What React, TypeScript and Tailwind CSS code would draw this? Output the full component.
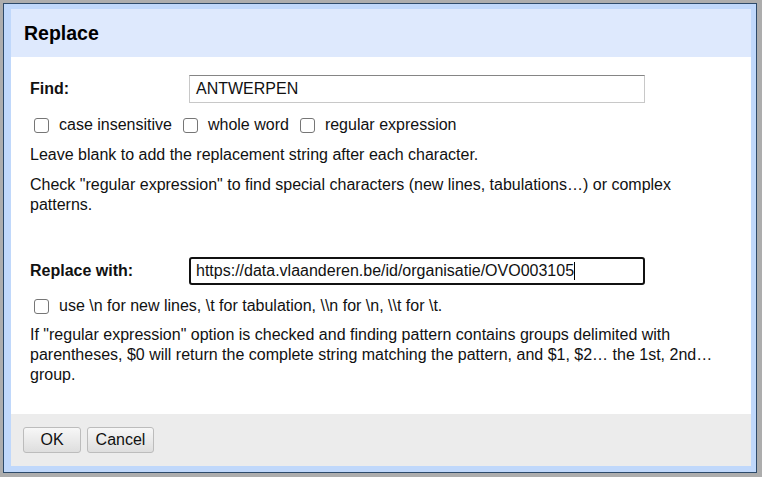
const FONT = { fontFamily: '"Liberation Sans", Arial, sans-serif' }

function Checkbox() {
  return (
    <span className="inline-block w-[15px] h-[15px] shrink-0 rounded-[3px] border border-[#767676] bg-white" />
  )
}

function Option({ label }: { label: string }) {
  return (
    <span className="flex items-center">
      <span className="ml-[4px] mr-[10px] flex items-center">
        <Checkbox />
      </span>
      <span>{label}</span>
    </span>
  )
}

export default function App() {
  return (
    <div
      className="w-[762px] h-[477px] bg-[#adadad] pt-[3px] pl-[3px] text-[16px] leading-[20px] text-[#111]"
      style={FONT}
    >
      <div className="w-[754px] h-[470px] border border-[#2d4a6a] bg-[#c0d8fb] pl-[7px] pr-[5px] pt-[5px] pb-[6px] flex flex-col">
        {/* header */}
        <div className="h-[48px] bg-[#dee9fd] pl-[13px] flex items-center">
          <h1 className="text-[19.5px] font-bold text-black">Replace</h1>
        </div>

        {/* body */}
        <div className="flex-1 bg-white pl-[19px] pr-[19px]">
          <div className="flex items-center mt-[18px]">
            <label className="w-[159px] font-bold">Find:</label>
            <div className="w-[456px] h-[28px] border border-[#c8c8c8] border-t-[#858585] pl-[6px] flex items-center">
              ANTWERPEN
            </div>
          </div>

          <div className="flex items-center gap-[7px] mt-[12px] h-[20px]">
            <Option label="case insensitive" />
            <Option label="whole word" />
            <Option label="regular expression" />
          </div>

          <p className="mt-[10px]">Leave blank to add the replacement string after each character.</p>
          <p className="mt-[10px]">
            Check "regular expression" to find special characters (new lines, tabulations…) or complex patterns.
          </p>

          <div className="flex items-center mt-[42px]">
            <label className="w-[159px] font-bold">Replace with:</label>
            <div className="w-[456px] h-[28px] border-2 border-[#111] rounded-[3px] pl-[5px] flex items-center">
              <span>https://data.vlaanderen.be/id/organisatie/OVO003105</span>
              <span className="w-px h-[18px] bg-black" />
            </div>
          </div>

          <div className="flex items-center mt-[11px] h-[20px]">
            <Option label="use \n for new lines, \t for tabulation, \\n for \n, \\t for \t." />
          </div>

          <p className="mt-[9px]">
            If "regular expression" option is checked and finding pattern contains groups delimited with parentheses,
            $0 will return the complete string matching the pattern, and $1, $2… the 1st, 2nd… group.
          </p>
        </div>

        {/* footer */}
        <div className="h-[52px] bg-[#ececec] pl-[12px] flex items-center gap-[6px]">
          <button className="w-[58px] h-[26px] rounded-[3px] border border-[#bcbcbc] bg-gradient-to-b from-[#f7f7f7] to-[#dedede] text-[#111]">
            OK
          </button>
          <button className="w-[67px] h-[26px] rounded-[3px] border border-[#bcbcbc] bg-gradient-to-b from-[#f7f7f7] to-[#dedede] text-[#111]">
            Cancel
          </button>
        </div>
      </div>
    </div>
  )
}
